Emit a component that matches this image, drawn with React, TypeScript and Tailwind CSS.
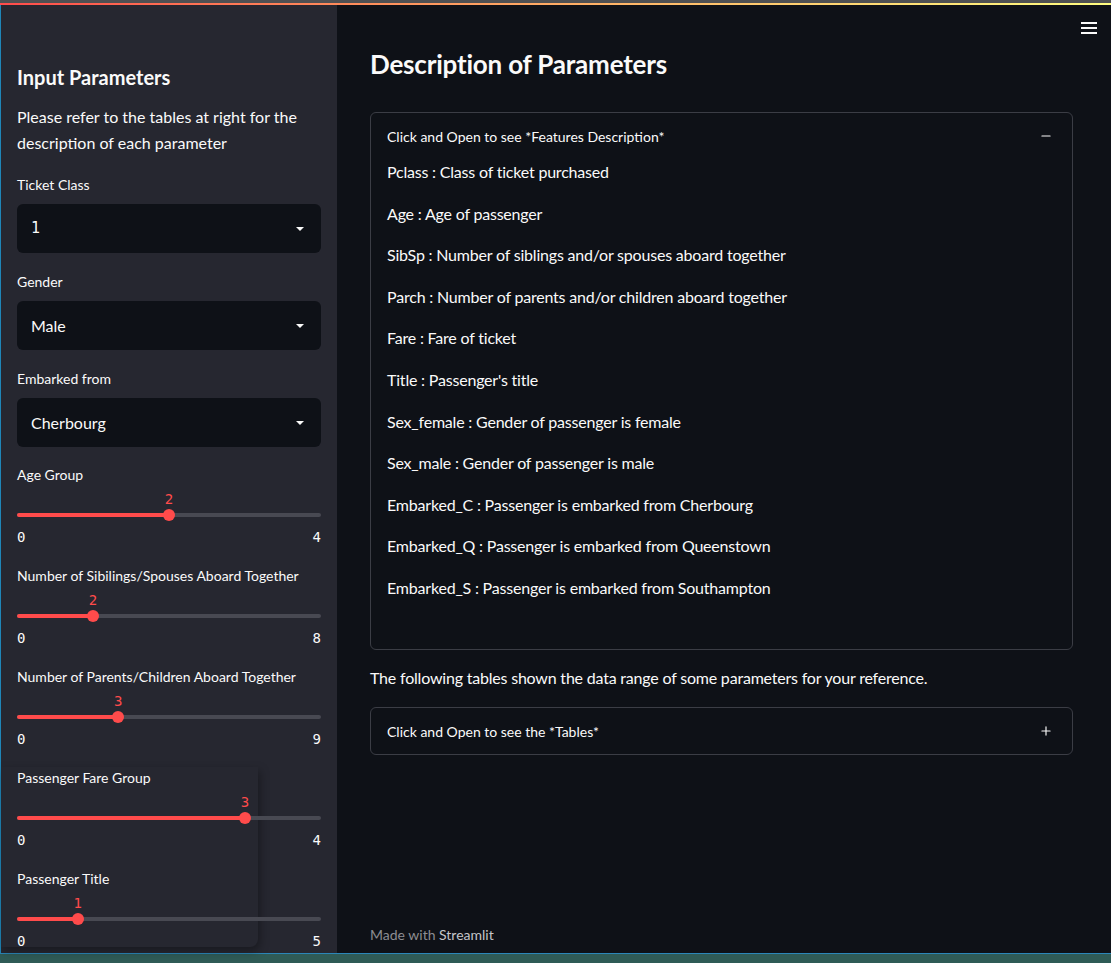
import { Minus, Plus } from 'lucide-react'

const sans = { fontFamily: 'Lato, "Noto Sans", sans-serif' }

const features = [
  'Pclass : Class of ticket purchased',
  'Age : Age of passenger',
  'SibSp : Number of siblings and/or spouses aboard together',
  'Parch : Number of parents and/or children aboard together',
  'Fare : Fare of ticket',
  "Title : Passenger's title",
  'Sex_female : Gender of passenger is female',
  'Sex_male : Gender of passenger is male',
  'Embarked_C : Passenger is embarked from Cherbourg',
  'Embarked_Q : Passenger is embarked from Queenstown',
  'Embarked_S : Passenger is embarked from Southampton',
]

const selects = [
  { label: 'Ticket Class', value: '1', mono: true },
  { label: 'Gender', value: 'Male' },
  { label: 'Embarked from', value: 'Cherbourg' },
]

const sliders = [
  { label: 'Age Group', value: 2, max: 4 },
  { label: 'Number of Sibilings/Spouses Aboard Together', value: 2, max: 8 },
  { label: 'Number of Parents/Children Aboard Together', value: 3, max: 9 },
  { label: 'Passenger Fare Group', value: 3, max: 4 },
  { label: 'Passenger Title', value: 1, max: 5 },
]

function SelectBox({ label, value, mono }: { label: string; value: string; mono?: boolean }) {
  return (
    <div className="mt-[19px]">
      <div className="h-5 text-[14px] leading-5 text-[#fafafa]">{label}</div>
      <div className="mt-[9px] flex h-[49px] items-center justify-between rounded-md bg-[#0e1117] pl-[14px] pr-[17px]">
        <span
          className="text-[16px] text-[#fafafa]"
          style={mono ? { fontFamily: '"DejaVu Sans Mono", monospace', fontSize: 15 } : undefined}
        >
          {value}
        </span>
        <span className="h-0 w-0 border-x-[4px] border-t-[4px] border-x-transparent border-t-[#fafafa]" />
      </div>
    </div>
  )
}

function Slider({ label, value, max, first }: { label: string; value: number; max: number; first?: boolean }) {
  const pct = (value / max) * 100
  return (
    <div className={first ? 'mt-[18px]' : 'mt-[19px]'}>
      <div className="h-5 text-[14px] leading-5 text-[#fafafa]">{label}</div>
      <div className="relative h-[26px]" style={{ fontFamily: '"DejaVu Sans Mono", monospace' }}>
        <span
          className="absolute top-[4px] -translate-x-1/2 text-[14px] leading-5 text-[#ff4b4b]"
          style={{ left: `${pct}%` }}
        >
          {value}
        </span>
      </div>
      <div className="relative flex h-2 items-center">
        <div className="h-1 w-full rounded-full bg-[#484952]" />
        <div className="absolute left-0 h-1 rounded-full bg-[#ff4b4b]" style={{ width: `${pct}%` }} />
        <div
          className="absolute h-3 w-3 -translate-x-1/2 rounded-full bg-[#ff4b4b]"
          style={{ left: `${pct}%` }}
        />
      </div>
      <div
        className="mt-2 flex h-5 justify-between text-[14px] leading-5 text-[#fafafa]"
        style={{ fontFamily: '"DejaVu Sans Mono", monospace' }}
      >
        <span>0</span>
        <span>{max}</span>
      </div>
    </div>
  )
}

export default function App() {
  return (
    <div className="flex h-[963px] w-[1111px] flex-col overflow-hidden bg-[#0e1117]" style={sans}>
      <div className="h-[3px] bg-[#4f5052]" />
      <div className="h-[2px] bg-gradient-to-r from-[#ff4b4b] to-[#fffd80]" />
      <div className="flex min-h-0 flex-1 border-l border-[#1f86b8]">
        {/* Sidebar */}
        <aside className="relative w-[336px] shrink-0 bg-[#262730]">
          <div className="pointer-events-none absolute left-0 top-[762px] h-[180px] w-[257px] rounded-br-lg shadow-[2px_4px_10px_rgba(0,0,0,0.35)]" />
          <div className="relative px-4 pt-[58px]">
            <h2 className="text-[20px] font-bold leading-7 text-[#fafafa]">Input Parameters</h2>
            <p className="mt-[13px] text-[16px] leading-[26px] text-[#fafafa]">
              Please refer to the tables at right for the description of each parameter
            </p>
            {selects.map((s) => (
              <SelectBox key={s.label} {...s} />
            ))}
            {sliders.map((s, i) => (
              <Slider key={s.label} {...s} first={i === 0} />
            ))}
          </div>
        </aside>

        {/* Main */}
        <main className="relative flex flex-1 flex-col pl-[33px] pr-[38px]">
          <button className="absolute right-[14px] top-[17px] flex w-4 flex-col gap-[3px]">
            <span className="h-[2px] w-4 bg-[#fafafa]" />
            <span className="h-[2px] w-4 bg-[#fafafa]" />
            <span className="h-[2px] w-4 bg-[#fafafa]" />
          </button>

          <h1 className="mt-[41px] text-[26px] font-bold leading-[36px] tracking-[-0.2px] text-[#fafafa]">
            Description of Parameters
          </h1>

          <div className="mt-[30px] rounded-md border border-[#3b3d45]">
            <div className="flex h-[46px] items-center justify-between pl-4 pr-[19px] text-[14px] text-[#fafafa]">
              <span>Click and Open to see *Features Description*</span>
              <Minus className="h-[14px] w-[14px]" strokeWidth={2} />
            </div>
            <div className="px-4 pb-[32px]">
              {features.map((f) => (
                <p key={f} className="mb-4 text-[16px] leading-[25.6px] tracking-[-0.2px] text-[#fafafa]">
                  {f}
                </p>
              ))}
            </div>
          </div>

          <p className="mt-[15px] text-[16px] leading-[25.6px] tracking-[-0.2px] text-[#fafafa]">
            The following tables shown the data range of some parameters for your reference.
          </p>

          <div className="mt-[17px] flex h-[48px] items-center justify-between rounded-md border border-[#3b3d45] pl-4 pr-[19px] text-[14px] text-[#fafafa]">
            <span>Click and Open to see the *Tables*</span>
            <Plus className="h-[14px] w-[14px]" strokeWidth={2} />
          </div>

          <div className="mt-auto pb-[8px] text-[14px] leading-5 text-[#8c8d92]">
            Made with <span className="text-[#c4c5c9]">Streamlit</span>
          </div>
        </main>
      </div>
      <div className="h-[10px] border-t border-[#2b86b8] bg-[#2f5b56]" />
    </div>
  )
}
